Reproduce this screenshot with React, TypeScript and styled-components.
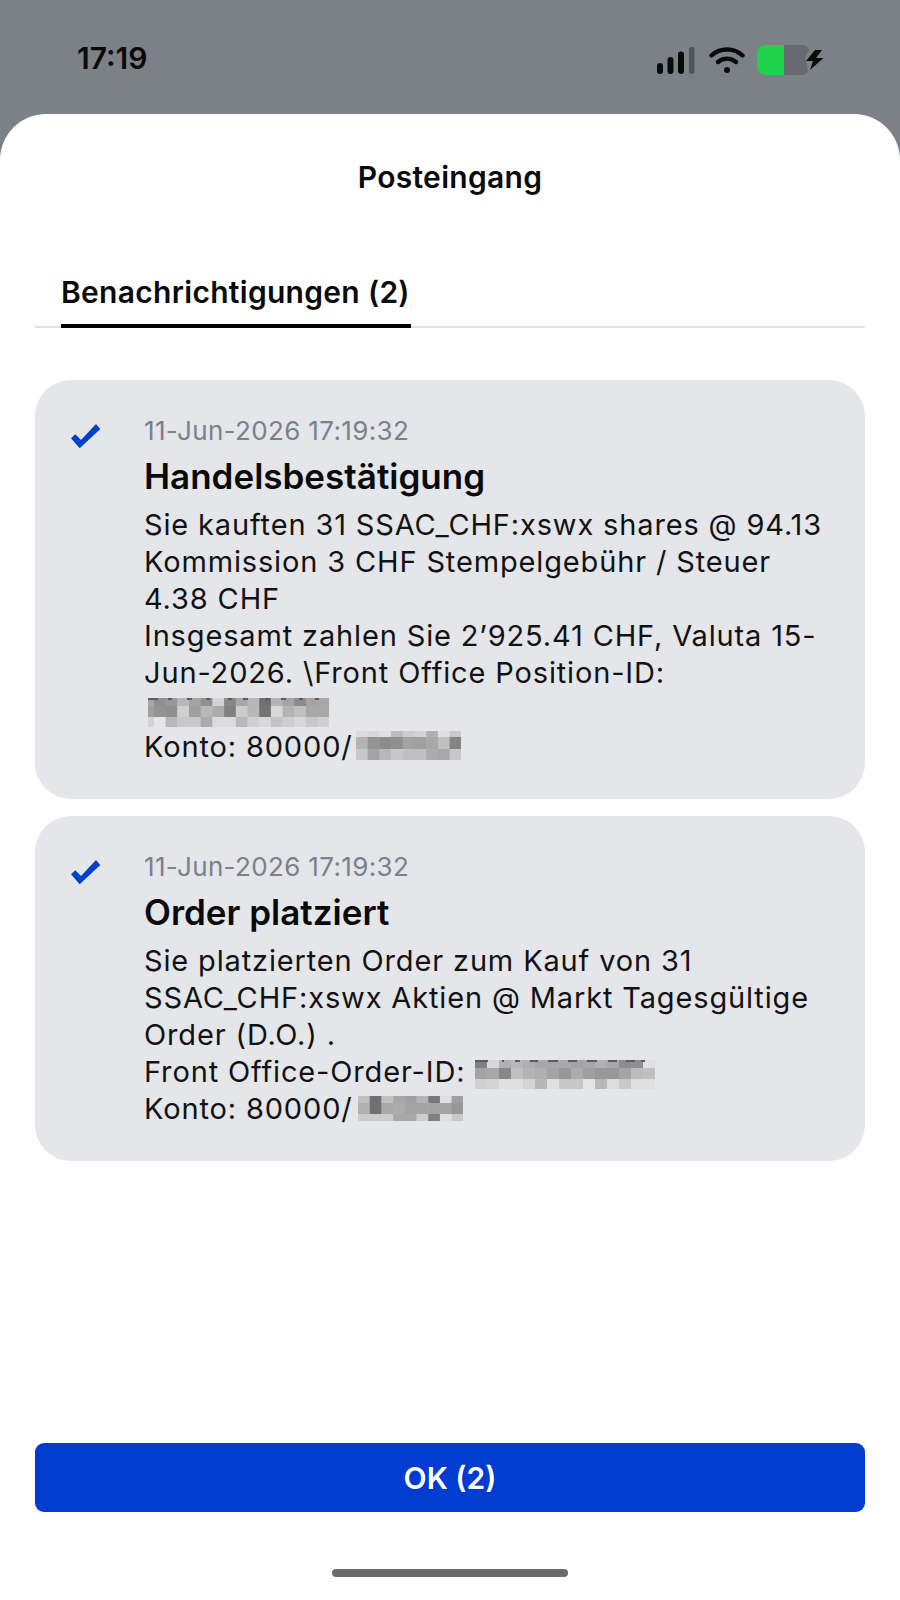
import React from "react";
import styled, { createGlobalStyle } from "styled-components";

const GlobalStyle = createGlobalStyle`
  html, body {
    margin: 0;
    padding: 0;
    background: #7c8087;
  }
  * {
    box-sizing: border-box;
  }
`;

const Screen = styled.div`
  width: 900px;
  height: 1600px;
  display: flex;
  flex-direction: column;
  background: #7c8087;
  font-family: Inter, "Liberation Sans", sans-serif;
  color: #0b0b0d;
  overflow: hidden;
`;

const StatusBar = styled.div`
  height: 114px;
  flex: none;
  display: flex;
  align-items: flex-start;
  justify-content: space-between;
  padding: 40px 76px 0 77px;
`;

const Clock = styled.div`
  font-size: 30px;
  line-height: 36px;
  font-weight: 600;
  color: #0a0a0a;
`;

const StatusIcons = styled.div`
  display: flex;
  align-items: center;
  gap: 12px;
  height: 36px;
  margin-top: 2px;
`;

const SignalIcon = styled.svg`
  margin-right: 2px;
`;

const Sheet = styled.div`
  flex: 1;
  display: flex;
  flex-direction: column;
  background: #fff;
  border-radius: 46px 46px 0 0;
  padding: 0 35px;
`;

const SheetTitle = styled.div`
  height: 126px;
  padding-top: 45px;
  text-align: center;
  font-size: 30px;
  line-height: 36px;
  font-weight: 600;
  letter-spacing: 0.3px;
`;

const Tabs = styled.div`
  display: flex;
  height: 88px;
  padding-left: 26px;
  border-bottom: 2px solid #dfe1e5;
`;

const Tab = styled.div`
  height: 88px;
  padding: 34px 1px 0 0;
  border-bottom: 4px solid #000;
  font-size: 30px;
  line-height: 36px;
  font-weight: 600;
  letter-spacing: 0.3px;
`;

const CardList = styled.div`
  flex: 1;
  display: flex;
  flex-direction: column;
  gap: 17px;
  padding-top: 52px;
`;

const Card = styled.div`
  display: flex;
  background: #e4e6ea;
  border-radius: 36px;
  padding: 33px 40px 34px 36px;
`;

const CheckWrap = styled.div`
  width: 73px;
  flex: none;
  padding-top: 11px;
`;

const CardBody = styled.div`
  flex: 1;
  min-width: 0;
`;

const Stamp = styled.div`
  font-size: 26px;
  line-height: 36px;
  letter-spacing: 0.35px;
  color: #7b808b;
`;

const CardTitle = styled.div`
  margin-top: 6px;
  font-size: 35px;
  line-height: 42px;
  font-weight: 600;
  color: #0a0a0a;
`;

const Message = styled.div`
  margin-top: 9px;
  font-size: 29px;
  line-height: 37px;
  letter-spacing: 0.85px;
  color: #121214;
`;

const Line = styled.div`
  height: 37px;
  white-space: nowrap;
  display: flex;
  align-items: flex-start;
`;

const Mosaic = styled.svg<{ $top: number; $left: number }>`
  display: block;
  flex: none;
  margin-top: ${(props) => props.$top}px;
  margin-left: ${(props) => props.$left}px;
`;

const ConfirmButton = styled.div`
  flex: none;
  height: 69px;
  display: flex;
  align-items: center;
  justify-content: center;
  background: #003ccf;
  border-radius: 9px;
  color: #fff;
  font-size: 30px;
  font-weight: 600;
`;

const HomeBar = styled.div`
  flex: none;
  height: 88px;
  display: flex;
  justify-content: center;
  padding-top: 57px;
`;

const HomeIndicator = styled.div`
  width: 236px;
  height: 8px;
  border-radius: 4px;
  background: #6b6b6b;
`;

const Signal = () => (
  <SignalIcon width="38" height="27" viewBox="0 0 38 27">
    <rect x="0" y="16" width="6" height="11" rx="3" fill="#0a0a0a" />
    <rect x="10.5" y="10" width="6" height="17" rx="3" fill="#0a0a0a" />
    <rect x="21" y="4.5" width="6" height="22.5" rx="3" fill="#0a0a0a" />
    <rect x="32" y="0" width="5.5" height="27" rx="2.5" fill="#50545a" />
  </SignalIcon>
);

const Wifi = () => (
  <svg width="36" height="28" viewBox="0 0 36 28" fill="none" stroke="#0a0a0a" strokeWidth="4.4" strokeLinecap="round">
    <path d="M2.5 9.5C11 1.5 25 1.5 33.5 9.5" />
    <path d="M9 16C14 11.5 22 11.5 27 16" />
    <circle cx="18" cy="24" r="3" fill="#0a0a0a" stroke="none" />
  </svg>
);

const Battery = () => (
  <svg width="67" height="30" viewBox="0 0 67 30">
    <path d="M26 0H46C49 0 50 1 52 5L48 13L50 20L51 25C50 29 49 30 46 30H26Z" fill="#66696f" />
    <path d="M9 0H27V30H9C4 30 0 26 0 21V9C0 4 4 0 9 0Z" fill="#1fd14d" />
    <path d="M58 5L49 16H56L53 25L66.5 13H59L65 5Z" fill="#0a0a0a" />
  </svg>
);

const Check = () => (
  <svg width="30" height="25" viewBox="0 0 30 25">
    <path d="M0 14.3L4.3 10.3L10 16L25 0L29.3 5L8.7 24.3Z" fill="#0040cf" />
  </svg>
);

// redacted ids from the picture: grey level per cell, row heights differ a bit
const idRows = [
  ["a8", "90", "98", "b8", "a4", "90", "d4", "88", "a8", "b8", "70", "b4", "a4", "8c", "a4", "a8"],
  ["a0", "94", "90", "d0", "a0", "b8", "ac", "80", "cc", "b8", "74", "d8", "b4", "c0", "a8", "a8"],
  ["d4", "e6", "b8", "c8", "c8", "ac", "dc", "dc", "b8", "d0", "d8", "c4", "ce", "d8", "c8", "d0"],
];
const accountRows = [
  ["dc", "d8", "e0", "bc", "cc", "d4", "b0", "e0", "c8"],
  ["b4", "94", "8c", "90", "a4", "a0", "a8", "c0", "84"],
  ["c8", "a4", "b8", "c8", "c0", "c0", "ac", "a8", "c8"],
];
const orderRows = [
  ["80", "d8", "b0", "b8", "b0", "a8", "a8", "a8", "a4", "a8", "b0", "a8", "8c", "90", "e0"],
  ["a4", "a8", "88", "c0", "b4", "b0", "a4", "98", "ac", "a0", "98", "98", "a4", "bc", "c0"],
  ["d0", "d4", "e0", "e0", "d4", "b8", "e0", "c8", "c8", "e4", "b8", "dc", "c8", "e0", "e0"],
];
const account2Rows = [
  ["c0", "70", "c0", "a8", "a0", "b4", "78", "e0", "a0"],
  ["b0", "70", "a8", "ac", "a4", "a4", "a4", "a4", "98"],
  ["cc", "cc", "cc", "a8", "a8", "cc", "80", "e0", "c8"],
];

// tops of the digits that stick out above the pixelated part
const idMarks = [[0, 10], [20, 4], [39, 5], [58, 4], [80, 4], [95, 5], [117, 5], [133, 5], [151, 4], [167, 4]];
const orderMarks = [[0, 13], [27, 2], [40, 5], [55, 8], [73, 10], [93, 9], [112, 10], [133, 9], [151, 9], [166, 4]];

type PixelsProps = {
  rows: string[][];
  cell: number;
  heights: number[];
  top: number;
  left: number;
  shift?: number;
  marks?: number[][];
};

const Pixels = ({ rows, cell, heights, top, left, shift = 0, marks = [] }: PixelsProps) => {
  const total = heights.reduce((a, b) => a + b, 0);
  let y = 0;
  return (
    <Mosaic width={rows[0].length * cell - shift} height={total} $top={top} $left={left}>
      {rows.map((row, r) => {
        const rowY = y;
        y += heights[r];
        return row.map((g, x) => (
          <rect key={`${x}-${r}`} x={x * cell - shift} y={rowY} width={cell + 0.5} height={heights[r]} fill={`#${g}${g}${g}`} />
        ));
      })}
      {marks.map(([x, w]) => (
        <rect key={x} x={x} y={0} width={w} height={2} fill="#5c5c60" />
      ))}
    </Mosaic>
  );
};

export default function App() {
  return (
    <>
      <GlobalStyle />
      <Screen>
        <StatusBar>
          <Clock>17:19</Clock>
          <StatusIcons>
            <Signal />
            <Wifi />
            <Battery />
          </StatusIcons>
        </StatusBar>
        <Sheet>
          <SheetTitle>Posteingang</SheetTitle>
          <Tabs>
            <Tab>Benachrichtigungen (2)</Tab>
          </Tabs>
          <CardList>
            <Card>
              <CheckWrap>
                <Check />
              </CheckWrap>
              <CardBody>
                <Stamp>11-Jun-2026 17:19:32</Stamp>
                <CardTitle>Handelsbestätigung</CardTitle>
                <Message>
                  <Line>Sie kauften 31 SSAC_CHF:xswx shares @ 94.13</Line>
                  <Line>Kommission 3 CHF Stempelgebühr / Steuer</Line>
                  <Line>4.38 CHF</Line>
                  <Line>Insgesamt zahlen Sie 2’925.41 CHF, Valuta 15-</Line>
                  <Line>Jun-2026. \Front Office Position-ID:</Line>
                  <Line>
                    <Pixels rows={idRows} cell={11.7} heights={[8, 11, 10]} top={7} left={4} shift={5.8} marks={idMarks} />
                  </Line>
                  <Line>
                    Konto: 80000/
                    <Pixels rows={accountRows} cell={11.7} heights={[6, 12, 11]} top={3} left={3} />
                  </Line>
                </Message>
              </CardBody>
            </Card>
            <Card>
              <CheckWrap>
                <Check />
              </CheckWrap>
              <CardBody>
                <Stamp>11-Jun-2026 17:19:32</Stamp>
                <CardTitle>Order platziert</CardTitle>
                <Message>
                  <Line>Sie platzierten Order zum Kauf von 31</Line>
                  <Line>SSAC_CHF:xswx Aktien @ Markt Tagesgültige</Line>
                  <Line>Order (D.O.) .</Line>
                  <Line>
                    Front Office-Order-ID:
                    <Pixels rows={orderRows} cell={12} heights={[8, 11, 10]} top={7} left={10} marks={orderMarks} />
                  </Line>
                  <Line>
                    Konto: 80000/
                    <Pixels rows={account2Rows} cell={11.7} heights={[7, 11, 7]} top={6} left={5} />
                  </Line>
                </Message>
              </CardBody>
            </Card>
          </CardList>
          <ConfirmButton>OK (2)</ConfirmButton>
          <HomeBar>
            <HomeIndicator />
          </HomeBar>
        </Sheet>
      </Screen>
    </>
  );
}
